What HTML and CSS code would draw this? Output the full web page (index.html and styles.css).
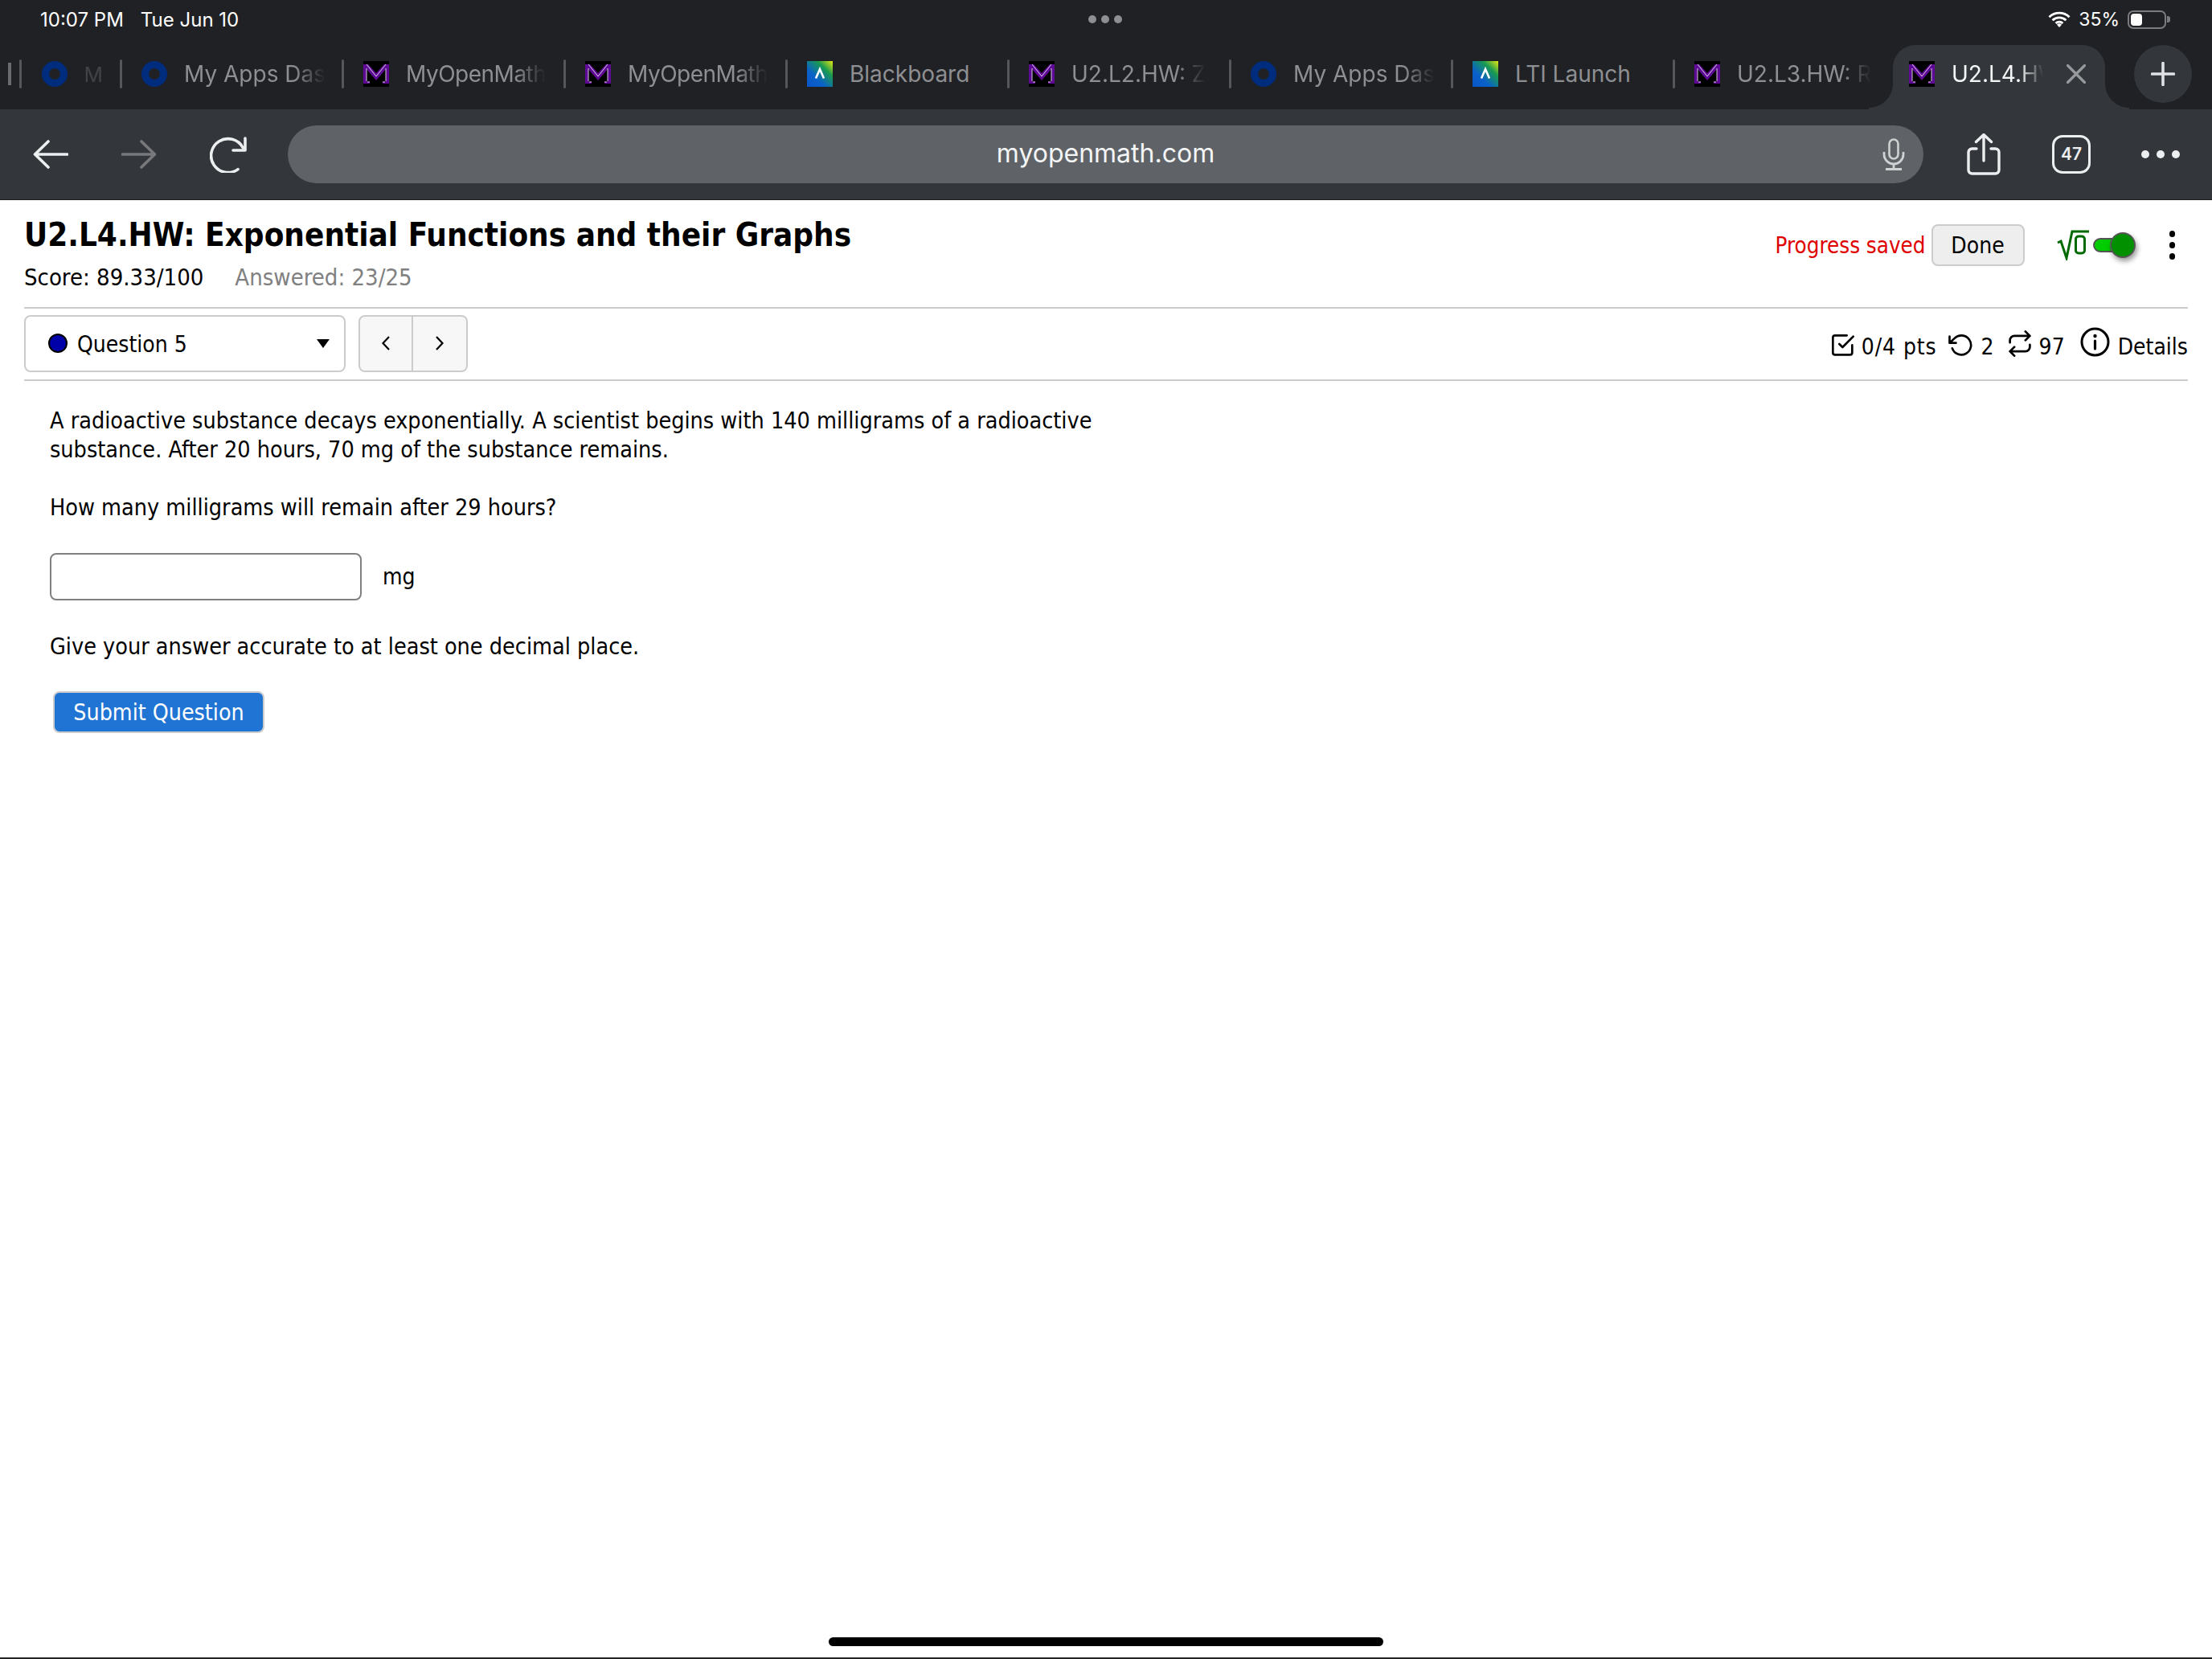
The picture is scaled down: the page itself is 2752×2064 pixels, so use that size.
FILE: index.html
```html
<!DOCTYPE html>
<html lang="en">
<head>
<meta charset="utf-8">
<title>U2.L4.HW: Exponential Functions and their Graphs</title>
<link rel="stylesheet" href="styles.css">
</head>
<body>
<svg class="defs" width="0" height="0" aria-hidden="true">
  <defs>
    <linearGradient id="bbg" x1="1" y1="0" x2="0" y2="1">
      <stop offset="0" stop-color="#e6e812"/>
      <stop offset=".3" stop-color="#1a9a50"/>
      <stop offset=".65" stop-color="#0a62c8"/>
      <stop offset="1" stop-color="#0a55c8"/>
    </linearGradient>
    <symbol id="fav-ring" viewBox="0 0 32 32">
      <circle cx="16" cy="16" r="11.5" fill="none" stroke="#002c7e" stroke-width="9"/>
    </symbol>
    <symbol id="fav-m" viewBox="0 0 32 32">
      <rect width="32" height="32" fill="#000"/>
      <path d="M0 4H6L16 15L26 4H32V28H24V25.500H28V10L16 24L4 10V25.500H8V28H0Z" fill="#5f0a96"/>
      <path d="M4 4L16 19L28 4M4 9V25M28 9V25M5 26H8M24 26H27" fill="none" stroke="#fff" stroke-width=".8"/>
    </symbol>
    <symbol id="fav-bb" viewBox="0 0 32 32">
      <rect width="32" height="32" fill="url(#bbg)"/>
      <path d="M11 21.5L16 10L21 21.5" fill="none" stroke="#fff" stroke-width="2.6"/>
    </symbol>
  </defs>
</svg>

<div class="chrome">
  <div class="status">
    <div class="status-left"><span class="clock">10:07 PM</span><span>Tue Jun 10</span></div>
    <div class="grab"><i></i><i></i><i></i></div>
    <div class="status-right">
      <svg class="wifi" viewBox="0 0 28 20"><path d="M1.5 7.2a18 18 0 0 1 25 0M5.6 11.2a12.2 12.2 0 0 1 16.8 0M9.6 15a6.6 6.6 0 0 1 8.8 0" fill="none" stroke="#fff" stroke-width="2.9"/><path d="M14 20l-3-3.2a4.3 4.3 0 0 1 6 0z" fill="#fff"/></svg>
      <span class="pct">35%</span>
      <div class="battery"><div class="cell"><b></b></div><i></i></div>
    </div>
  </div>

  <div class="tabstrip">
    <i class="sliver"></i>
    <div class="tab tab-first"><svg class="fav"><use href="#fav-ring"/></svg><span class="tab-text fade-all">M</span></div>
    <div class="tab"><svg class="fav"><use href="#fav-ring"/></svg><span class="tab-text fade">My Apps Das</span></div>
    <div class="tab"><svg class="fav"><use href="#fav-m"/></svg><span class="tab-text fade tight">MyOpenMath</span></div>
    <div class="tab"><svg class="fav"><use href="#fav-m"/></svg><span class="tab-text fade tight">MyOpenMath</span></div>
    <div class="tab"><svg class="fav"><use href="#fav-bb"/></svg><span class="tab-text">Blackboard</span></div>
    <div class="tab"><svg class="fav"><use href="#fav-m"/></svg><span class="tab-text fade">U2.L2.HW: Z</span></div>
    <div class="tab"><svg class="fav"><use href="#fav-ring"/></svg><span class="tab-text fade">My Apps Das</span></div>
    <div class="tab"><svg class="fav"><use href="#fav-bb"/></svg><span class="tab-text">LTI Launch</span></div>
    <div class="tab tab-last"><svg class="fav"><use href="#fav-m"/></svg><span class="tab-text fade">U2.L3.HW: R</span></div>
    <div class="tab-active">
      <svg class="fav"><use href="#fav-m"/></svg>
      <span class="tab-text fade-end">U2.L4.HW</span>
      <svg class="tab-close" viewBox="0 0 24 24"><path d="M1.5 1.5L22.5 22.5M22.5 1.5L1.5 22.5" fill="none" stroke="#98999c" stroke-width="3.2" stroke-linecap="round"/></svg>
    </div>
    <div class="newtab"><svg viewBox="0 0 30 30"><path d="M15 1.5V28.5M1.5 15H28.5" fill="none" stroke="#dfe1e4" stroke-width="3.6" stroke-linecap="round"/></svg></div>
  </div>

  <div class="toolbar">
    <svg class="ico-arrow" viewBox="0 0 44 36"><path d="M42.5 18H2.5M19 2L2.5 18L19 34" fill="none" stroke="#eceef0" stroke-width="3.6" stroke-linecap="round" stroke-linejoin="round"/></svg>
    <svg class="ico-arrow ico-forward" viewBox="0 0 44 36"><path d="M1.5 18H41.5M25 2L41.5 18L25 34" fill="none" stroke="#77797b" stroke-width="3.6" stroke-linecap="round" stroke-linejoin="round"/></svg>
    <svg class="ico-reload" viewBox="0 0 46 46"><path d="M35 41.6A21 21 0 1 1 41 14.5M44 3V18H29" fill="none" stroke="#eceef0" stroke-width="3.6" stroke-linecap="round" stroke-linejoin="round"/></svg>
    <div class="urlbar">
      <span></span>
      <span class="url">myopenmath.com</span>
      <svg class="mic" viewBox="0 0 28 40"><rect x="8.5" y="1.5" width="11" height="24" rx="5.5" fill="none" stroke="#cfd1d3" stroke-width="2.6"/><path d="M2 17V20A12 12 0 0 0 26 20V17M14 32V38M4 38.5H24" fill="none" stroke="#cfd1d3" stroke-width="2.8"/></svg>
    </div>
    <svg class="share" viewBox="0 0 42 52"><path d="M12 19H6.5A4.5 4.5 0 0 0 2 23.500V45.500A4.500 4.500 0 0 0 6.500 50H35.500A4.500 4.500 0 0 0 40 45.500V23.500A4.500 4.500 0 0 0 35.500 19H30M21 34V2M11.500 10.500L21 1.500L30.500 10.500" fill="none" stroke="#eceef0" stroke-width="3.400" stroke-linecap="round" stroke-linejoin="round"/></svg>
    <div class="tabcount">47</div>
    <div class="more"><i></i><i></i><i></i></div>
  </div>
</div>

<div class="page">
  <header class="head">
    <div class="head-left">
      <h1 class="title">U2.L4.HW: Exponential Functions and their Graphs</h1>
      <div class="score"><span>Score: 89.33/100</span><span class="answered">Answered: 23/25</span></div>
    </div>
    <div class="head-right">
      <span class="saved">Progress saved</span>
      <button class="btn-done" type="button">Done</button>
      <svg class="sqrt" viewBox="0 0 40 38"><path d="M1 16L5 14L12 35L19 2H40" fill="none" stroke="#006a00" stroke-width="3"/><rect x="23.500" y="8" width="11" height="21" rx="3.500" fill="none" stroke="#006a00" stroke-width="3"/></svg>
      <div class="toggle"><span class="track"></span><span class="knob"></span></div>
      <div class="kebab"><i></i><i></i><i></i></div>
    </div>
  </header>

  <nav class="qbar">
    <div class="qselect">
      <span class="qdot"></span>
      <span class="qname">Question 5</span>
      <span class="caret"></span>
    </div>
    <div class="pager">
      <button type="button"><svg viewBox="0 0 12 20"><path d="M10 2L2.500 10L10 18" fill="none" stroke="#000" stroke-width="2.200"/></svg></button>
      <button type="button"><svg viewBox="0 0 12 20"><path d="M2 2L9.500 10L2 18" fill="none" stroke="#000" stroke-width="2.200"/></svg></button>
    </div>
    <div class="qmeta">
      <svg class="m-check" viewBox="2 2 21 21"><path d="M9 11L12 14L22 4M21 12V19A2 2 0 0 1 19 21H5A2 2 0 0 1 3 19V5A2 2 0 0 1 5 3H16" fill="none" stroke="#000" stroke-width="2" stroke-linecap="round" stroke-linejoin="round"/></svg>
      <span class="m-pts">0/4 pts</span>
      <svg class="m-undo" viewBox="0 2 23 21"><path d="M1 4V10H7M3.510 15A9 9 0 1 0 5.640 5.640L1 10" fill="none" stroke="#000" stroke-width="2" stroke-linecap="round" stroke-linejoin="round"/></svg>
      <span class="m-two">2</span>
      <svg class="m-repeat" viewBox="2 0 20 24"><path d="M17 1L21 5L17 9M3 11V9A4 4 0 0 1 7 5H21M7 23L3 19L7 15M21 13V15A4 4 0 0 1 17 19H3" fill="none" stroke="#000" stroke-width="2" stroke-linecap="round" stroke-linejoin="round"/></svg>
      <span class="m-tries">97</span>
      <svg class="m-info" viewBox="0 0 37 37"><circle cx="18.500" cy="18.500" r="16.500" fill="none" stroke="#000" stroke-width="3"/><path d="M18.500 17V27" stroke="#000" stroke-width="3.200" stroke-linecap="round"/><circle cx="18.500" cy="11" r="2.200" fill="#000"/></svg>
      <span class="m-details">Details</span>
    </div>
  </nav>

  <main class="question">
    <p class="qtext">A radioactive substance decays exponentially. A scientist begins with 140 milligrams of a radioactive substance. After 20 hours, 70 mg of the substance remains.</p>
    <p class="qtext q-gap">How many milligrams will remain after 29 hours?</p>
    <div class="answer"><input class="answer-box" type="text" aria-label="answer"><span>mg</span></div>
    <p class="qtext">Give your answer accurate to at least one decimal place.</p>
    <button class="btn-submit" type="button">Submit Question</button>
  </main>

  <div class="homebar"><i></i></div>
</div>
</body>
</html>
```
FILE: styles.css
```css
* { box-sizing: border-box; }
html, body { margin: 0; padding: 0; background: #fff; }
body {
  width: 2752px;
  height: 2064px;
  overflow: hidden;
  display: flex;
  flex-direction: column;
  font-family: "DejaVu Sans Condensed", "DejaVu Sans", Tahoma, sans-serif;
  font-stretch: condensed;
  color: #000;
}
.defs { position: absolute; }

/* browser chrome */
.chrome { font-family: Inter, "Liberation Sans", sans-serif; font-stretch: normal; background: #202125; flex: none; }
.status {
  height: 48px;
  display: grid;
  grid-template-columns: 1fr auto 1fr;
  align-items: center;
  padding: 0 52px 0 50px;
  color: #fff;
  font-size: 24px;
}
.status-left { display: flex; gap: 21px; }
.grab { display: flex; gap: 6px; }
.grab i { width: 10px; height: 10px; border-radius: 50%; background: #8e8f92; }
.status-right { display: flex; align-items: center; justify-content: flex-end; gap: 10px; }
.wifi { width: 28px; height: 20px; }
.pct { font-size: 23px; }
.battery { display: flex; align-items: center; gap: 1px; }
.cell { width: 48px; height: 23px; border: 2px solid #7b7c7f; border-radius: 7px; padding: 2px; }
.cell b { display: block; width: 14px; height: 15px; background: #fff; border-radius: 4px; }
.battery i { width: 4px; height: 8px; background: #7b7c7f; border-radius: 0 3px 3px 0; }

.tabstrip { height: 88px; padding-top: 8px; display: flex; align-items: flex-start; }
.sliver { width: 4px; height: 28px; margin: 22px 10px 0 10px; background: #6a6c70; flex: none; }
.tab {
  position: relative;
  flex: none;
  width: 276px;
  height: 72px;
  display: flex;
  align-items: center;
  gap: 21px;
  padding-left: 27.5px;
}
.tab::before {
  content: "";
  position: absolute;
  left: 0;
  top: 18px;
  width: 3px;
  height: 36px;
  background: #55575b;
  border-radius: 1.5px;
}
.tab-first { width: 124.500px; }
.fav { width: 32px; height: 32px; flex: none; }
.tab-text { font-size: 28px; color: #8e8f92; white-space: nowrap; flex: none; }
.tight { letter-spacing: -.5px; }
.fade { -webkit-mask-image: linear-gradient(to right, #000 78%, transparent 100%); mask-image: linear-gradient(to right, #000 78%, transparent 100%); }
.fade-all { opacity: .3; font-size: 26px; }
.fade-end { -webkit-mask-image: linear-gradient(to right, #000 68%, transparent 92%); mask-image: linear-gradient(to right, #000 68%, transparent 92%); }
.tab-last { width: 274.500px; }
.tab-active {
  position: relative;
  flex: none;
  width: 264px;
  height: 80px;
  padding: 0 0 8px 20px;
  display: flex;
  align-items: center;
  gap: 21px;
  background: #33363a;
  border-radius: 28px 28px 0 0;
}
.tab-active::before, .tab-active::after {
  content: "";
  position: absolute;
  bottom: 0;
  width: 30px;
  height: 32px;
}
.tab-active::before { left: -30px; background: radial-gradient(circle at 0 0, transparent 29.500px, #33363a 30.500px); }
.tab-active::after { right: -30px; background: radial-gradient(circle at 100% 0, transparent 29.500px, #33363a 30.500px); }
.tab-active .tab-text { color: #f4f5f6; width: 124px; }
.tab-close { width: 24px; height: 24px; margin-left: -2px; flex: none; }
.newtab {
  position: relative;
  flex: none;
  width: 72px;
  height: 72px;
  margin-left: 36px;
  border-radius: 50%;
  background: #33363a;
  display: flex;
  align-items: center;
  justify-content: center;
}
.newtab svg { width: 30px; height: 30px; }

.toolbar {
  height: 113px;
  background: #33363a;
  border-bottom: 1px solid #1c1d20;
  display: flex;
  align-items: center;
  padding: 0 42px 1px 41px;
}
.ico-arrow { width: 44px; height: 36px; flex: none; }
.ico-forward { margin-left: 66px; }
.ico-reload { width: 46px; height: 46px; margin-left: 66px; flex: none; }
.urlbar {
  width: 2035px;
  height: 72px;
  margin-left: 51px;
  border-radius: 36px;
  background: #5f6367;
  display: grid;
  grid-template-columns: 1fr auto 1fr;
  align-items: center;
  flex: none;
}
.url { font-size: 32px; color: #f4f5f6; padding-bottom: 3px; }
.mic { width: 28px; height: 40px; justify-self: end; margin-right: 23px; }
.share { width: 42px; height: 52px; margin-left: 54px; flex: none; }
.tabcount {
  width: 48px;
  height: 48px;
  margin-left: 64px;
  border: 3px solid #eceef0;
  border-radius: 13px;
  display: flex;
  align-items: center;
  justify-content: center;
  font-size: 21px;
  font-weight: 600;
  color: #eceef0;
  flex: none;
}
.more { display: flex; gap: 9px; margin-left: 63px; flex: none; }
.more i { width: 10px; height: 10px; border-radius: 50%; background: #eceef0; }

/* page */
.page { flex: 1; display: flex; flex-direction: column; padding: 0 30px; background: #fff; min-height: 0; }
.head { height: 135px; border-bottom: 2px solid #ccc; display: flex; justify-content: space-between; flex: none; }
.title { margin: 20px 0 0; font-size: 40px; line-height: 46px; font-weight: 700; }
.score { margin-top: 13px; font-size: 29px; line-height: 34px; display: flex; gap: 39px; }
.answered { color: #808080; }
.head-right { display: flex; align-items: center; height: 52px; margin-top: 30px; }
.saved { font-size: 27.500px; color: #e00000; }
.btn-done {
  width: 116px;
  height: 52px;
  margin-left: 7px;
  padding: 0;
  font: inherit;
  font-size: 28px;
  background: #eee;
  border: 2px solid #ccc;
  border-radius: 8px;
  color: #000;
}
.sqrt { width: 40px; height: 38px; margin-left: 40px; }
.toggle { display: flex; align-items: center; margin-left: 5px; }
.track { width: 37px; height: 18px; background: #00cc00; border: 2px solid #555; border-radius: 9px; flex: none; }
.knob { width: 32px; height: 32px; margin-left: -16px; background: #009000; border: 2px solid #555; border-radius: 50%; box-shadow: 2px 4px 6px rgba(0,0,0,.4); flex: none; }
.kebab { display: flex; flex-direction: column; gap: 6.500px; margin: 0 16px 0 42px; }
.kebab i { width: 7.500px; height: 7.500px; background: #000; border-radius: 50%; }

.qbar { height: 90px; border-bottom: 2px solid #ccc; display: flex; align-items: center; flex: none; padding-bottom: 2px; }
.qselect {
  width: 400px;
  height: 71px;
  border: 2px solid #ccc;
  border-radius: 8px;
  display: flex;
  align-items: center;
  padding: 0 18px 0 28px;
  font-size: 28px;
}
.qdot { width: 24px; height: 24px; background: #0000a8; border: 2px solid #000; border-radius: 50%; flex: none; }
.qname { margin-left: 12px; flex: 1; padding-top: 2px; }
.caret { width: 0; height: 0; border-left: 8px solid transparent; border-right: 8px solid transparent; border-top: 11px solid #000; }
.pager { display: flex; height: 71px; margin-left: 16px; }
.pager button {
  width: 68px;
  background: #f7f7f7;
  border: 2px solid #ccc;
  padding: 0;
  display: flex;
  align-items: center;
  justify-content: center;
}
.pager button:first-child { border-radius: 8px 0 0 8px; }
.pager button:last-child { border-radius: 0 8px 8px 0; border-left: 0; }
.pager svg { width: 12px; height: 20px; }
.qmeta { margin-left: auto; margin-top: 2px; display: flex; align-items: flex-end; font-size: 28px; line-height: 36px; }
.qmeta svg { flex: none; margin-bottom: 6px; }
.m-check { width: 28px; height: 28px; }
.m-pts { margin-left: 9px; letter-spacing: .9px; }
.m-undo { width: 31px; height: 28px; margin-left: 14px; }
.m-two { margin-left: 10px; }
.m-repeat { width: 28px; height: 33px; margin-left: 18px; margin-bottom: 4px; }
.m-tries { margin-left: 10px; }
.m-info { width: 37px; height: 37px; margin-left: 19px; }
.qmeta .m-info { margin-bottom: 6px; }
.m-details { margin-left: 10px; }

.question { flex: 1; padding: 32px 0 0 32px; min-height: 0; }
.qtext { margin: 0; width: 1400px; font-size: 28.500px; line-height: 36px; }
.q-gap { margin-top: 36px; }
.answer { display: flex; align-items: center; gap: 26px; margin: 38px 0 40px; font-size: 28px; }
.answer-box { width: 388px; height: 59px; border: 2px solid #808080; border-radius: 8px; background: #fff; padding: 0; }
.btn-submit {
  display: block;
  width: 263px;
  height: 52px;
  margin: 37px 0 0 4px;
  padding: 0;
  font: inherit;
  font-size: 28.300px;
  color: #fff;
  background: #1f74d4;
  border: 2px solid #ccc;
  border-radius: 8px;
}
.homebar { flex: none; margin: 0 -30px; height: 27px; border-bottom: 2px solid #222; display: flex; justify-content: center; }
.homebar i { width: 690px; height: 11px; border-radius: 6px; background: #000; }
```
